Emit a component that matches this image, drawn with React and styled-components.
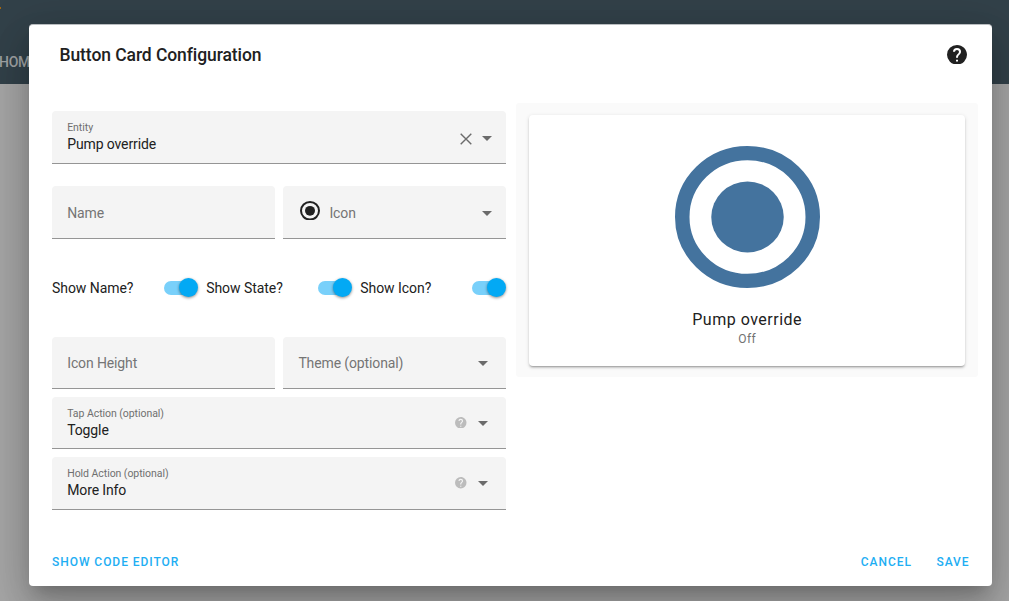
import React from "react";
import styled, { createGlobalStyle } from "styled-components";

const GlobalStyle = createGlobalStyle`
  *, *::before, *::after { box-sizing: border-box; }
  html, body, #root { margin: 0; height: 100%; }
  body {
    overflow: hidden;
    background: #a6a6a6;
    font-family: Roboto, "Liberation Sans", sans-serif;
    color: #212121;
  }
  button { font: inherit; border: 0; background: none; padding: 0; }
  svg { display: block; flex: none; }
`;

const Page = styled.div`
  position: relative;
  height: 601px;
  overflow: hidden;
`;

const AppHeader = styled.header`
  height: 83.5px;
  padding-top: 53px;
  background: #324149;
`;

const HeaderTab = styled.span`
  display: block;
  margin-left: -1px;
  font-size: 14px;
  font-weight: 500;
  line-height: 18px;
  letter-spacing: -0.3px;
  color: #a0a3a4;
`;

const Accent = styled.i`
  position: absolute;
  left: 0;
  top: 7px;
  width: 1px;
  height: 2px;
  background: #a5670f;
`;

const Dialog = styled.section`
  position: absolute;
  left: 29px;
  top: 24px;
  width: 963px;
  height: 562px;
  padding: 0 14px 0 23px;
  display: flex;
  flex-direction: column;
  border-radius: 4px;
  border-top: 1px solid #b9bdc0;
  background: #fff;
  box-shadow: 0 11px 15px -7px rgba(0, 0, 0, 0.2),
    0 24px 38px 3px rgba(0, 0, 0, 0.14), 0 9px 46px 8px rgba(0, 0, 0, 0.12);
`;

const TitleBar = styled.header`
  height: 78px;
  padding: 19px 11.5px 0 7.5px;
  display: flex;
  justify-content: space-between;
  align-items: flex-start;

  svg {
    margin-top: 0.5px;
  }
`;

const Title = styled.h2`
  margin: 0;
  font-size: 17.5px;
  font-weight: 500;
  line-height: 22px;
  letter-spacing: -0.08px;
`;

const Content = styled.div`
  display: flex;
  gap: 9.5px;
  align-items: flex-start;
`;

const Form = styled.div`
  width: 454.4px;
  padding-top: 8px;
  display: flex;
  flex-direction: column;
`;

const Pair = styled.div`
  display: grid;
  grid-template-columns: 1fr 1fr;
  gap: 8px;
  margin-top: ${(p) => p.$top || 0}px;
`;

const FieldBox = styled.div`
  height: 52.5px;
  margin-top: ${(p) => p.$top || 0}px;
  padding: 0 ${(p) => p.$end || 15}px 0 15.2px;
  display: flex;
  align-items: center;
  border-radius: 4px 4px 0 0;
  border-bottom: 1px solid #959595;
  background: #f4f4f4;
`;

const FieldText = styled.div`
  flex: 1;
  display: flex;
  flex-direction: column;
`;

const Label = styled.span`
  padding-top: 1px;
  font-size: 10.5px;
  line-height: 14px;
  letter-spacing: -0.05px;
  color: #6f6f6f;
`;

const Value = styled.span`
  font-size: 14px;
  line-height: 18px;
  letter-spacing: -0.12px;
  color: #212121;
`;

const Placeholder = styled.span`
  flex: 1;
  padding-top: 1.5px;
  font-size: 14px;
  line-height: 18px;
  letter-spacing: -0.12px;
  color: #757575;
`;

const Toggles = styled.div`
  height: 98px;
  display: flex;
  align-items: center;
  gap: 8px;
`;

const Toggle = styled.div`
  flex: 1;
  display: flex;
  align-items: center;
  justify-content: space-between;
  font-size: 14px;
  line-height: 20px;
  letter-spacing: -0.05px;
`;

const Track = styled.span`
  position: relative;
  width: 34.5px;
  height: 19px;
  display: flex;
  align-items: center;
  justify-content: flex-end;

  &::before {
    content: "";
    position: absolute;
    left: 0;
    top: 3px;
    width: 30px;
    height: 13.5px;
    border-radius: 7px;
    background: #79d0fa;
  }
`;

const Knob = styled.span`
  position: relative;
  width: 19px;
  height: 19px;
  border-radius: 50%;
  background: #03a9f4;
  box-shadow: 0 1px 3px rgba(0, 0, 0, 0.45);
`;

const Preview = styled.aside`
  width: 462px;
  height: 273.5px;
  padding: 11.5px 13px 11px 13.5px;
  border-radius: 3px;
  background: #fafafa;
`;

const Card = styled.div`
  height: 251px;
  padding-top: 31px;
  display: flex;
  flex-direction: column;
  align-items: center;
  border-radius: 4px;
  background: #fff;
  box-shadow: 0 2px 2px rgba(0, 0, 0, 0.14), 0 1px 4px rgba(0, 0, 0, 0.12),
    0 2px 1px -1px rgba(0, 0, 0, 0.15);
`;

const CardName = styled.span`
  margin-top: 20px;
  font-size: 16px;
  line-height: 23px;
  letter-spacing: 0.5px;
`;

const CardState = styled.span`
  margin-top: 1px;
  font-size: 12px;
  line-height: 15px;
  letter-spacing: 0.4px;
  color: #727272;
`;

const Footer = styled.footer`
  margin-top: auto;
  height: 48px;
  padding-right: 8.5px;
  display: flex;
  align-items: center;
`;

const TextButton = styled.button`
  margin-left: ${(p) => (p.$push ? "auto" : `${p.$left || 0}px`)};
  font-size: 12px;
  font-weight: 500;
  line-height: 20px;
  letter-spacing: 0.95px;
  color: #1eaef3;
`;

const ArrowSvg = styled.svg`
  margin: ${(p) => p.$drop || 0}px 0 0 ${(p) => p.$left || 0}px;
`;

const Arrow = ({ left, drop }) => (
  <ArrowSvg $left={left} $drop={drop} width="10" height="5" viewBox="0 0 10 5">
    <path d="M0 0h10L5 5z" fill="#6b6b6b" />
  </ArrowSvg>
);

const HelpIcon = ({ width, height, color }) => (
  <svg width={width} height={height} viewBox="2 2 20 20" preserveAspectRatio="none">
    <path
      fill={color}
      d="M15.07 11.25l-.9.92C13.45 12.89 13 13.5 13 15h-2v-.5c0-1.11.45-2.11 1.17-2.83l1.24-1.26c.37-.36.59-.86.59-1.41a2 2 0 0 0-2-2 2 2 0 0 0-2 2H8a4 4 0 0 1 4-4 4 4 0 0 1 4 4c0 .88-.36 1.67-.93 2.25M13 19h-2v-2h2M12 2A10 10 0 0 0 2 12a10 10 0 0 0 10 10 10 10 0 0 0 10-10c0-5.53-4.5-10-10-10z"
    />
  </svg>
);

const RadioIcon = ({ width, height, color }) => (
  <svg width={width} height={height} viewBox="2 2 20 20" preserveAspectRatio="none">
    <circle cx="12" cy="12" r="9" fill="none" stroke={color} strokeWidth="2" />
    <circle cx="12" cy="12" r="5" fill={color} />
  </svg>
);

const IconSlot = styled.span`
  margin: -3px 9.5px 0 1.5px;
`;

const CloseSvg = styled.svg`
  margin-top: 4px;
`;

const CloseIcon = () => (
  <CloseSvg width="12" height="12" viewBox="0 0 12 12">
    <path d="M.7.7l10.6 10.6M11.3.7L.7 11.3" stroke="#6b6b6b" strokeWidth="1.4" />
  </CloseSvg>
);

const ActionField = ({ label, value }) => (
  <FieldBox $top={7.75} $end={18}>
    <FieldText>
      <Label>{label}</Label>
      <Value>{value}</Value>
    </FieldText>
    <HelpIcon width={11.5} height={11.5} color="#bcbcbc" />
    <Arrow left={11.5} drop={2} />
  </FieldBox>
);

export default function App() {
  return (
    <>
      <GlobalStyle />
      <Page>
        <AppHeader>
          <HeaderTab>HOM</HeaderTab>
          <Accent />
        </AppHeader>
        <Dialog>
          <TitleBar>
            <Title>Button Card Configuration</Title>
            <HelpIcon width={20} height={19.5} color="#212121" />
          </TitleBar>
          <Content>
            <Form>
              <FieldBox $end={14}>
                <FieldText>
                  <Label>Entity</Label>
                  <Value>Pump override</Value>
                </FieldText>
                <CloseIcon />
                <Arrow left={10.5} drop={3} />
              </FieldBox>
              <Pair $top={22.5}>
                <FieldBox>
                  <Placeholder>Name</Placeholder>
                </FieldBox>
                <FieldBox $end={14}>
                  <IconSlot>
                    <RadioIcon width={20} height={19.5} color="#212121" />
                  </IconSlot>
                  <Placeholder>Icon</Placeholder>
                  <Arrow drop={3} />
                </FieldBox>
              </Pair>
              <Toggles>
                {["Show Name?", "Show State?", "Show Icon?"].map((text) => (
                  <Toggle key={text}>
                    {text}
                    <Track>
                      <Knob />
                    </Track>
                  </Toggle>
                ))}
              </Toggles>
              <Pair>
                <FieldBox>
                  <Placeholder>Icon Height</Placeholder>
                </FieldBox>
                <FieldBox $end={18}>
                  <Placeholder>Theme (optional)</Placeholder>
                  <Arrow drop={2.5} />
                </FieldBox>
              </Pair>
              <ActionField label="Tap Action (optional)" value="Toggle" />
              <ActionField label="Hold Action (optional)" value="More Info" />
            </Form>
            <Preview>
              <Card>
                <RadioIcon width={145} height={142} color="#44739e" />
                <CardName>Pump override</CardName>
                <CardState>Off</CardState>
              </Card>
            </Preview>
          </Content>
          <Footer>
            <TextButton>SHOW CODE EDITOR</TextButton>
            <TextButton $push>CANCEL</TextButton>
            <TextButton $left={24.5}>SAVE</TextButton>
          </Footer>
        </Dialog>
      </Page>
    </>
  );
}
